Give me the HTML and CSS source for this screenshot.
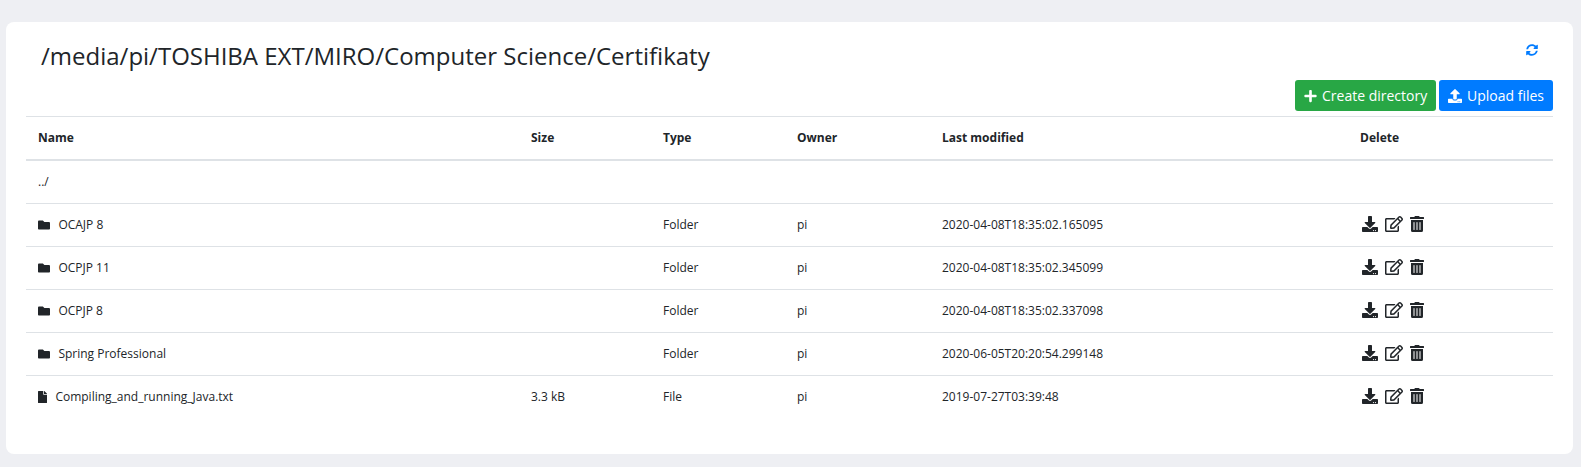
FILE: index.html
```html
<!DOCTYPE html>
<html lang="en">
<head>
<meta charset="utf-8">
<title>Certifikaty</title>
<link rel="stylesheet" href="styles.css">
</head>
<body>
<svg class="sprite" aria-hidden="true">
  <symbol id="plus" viewBox="0 0 448 512"><path d="M416 208H272V64c0-17.67-14.33-32-32-32h-32c-17.67 0-32 14.33-32 32v144H32c-17.67 0-32 14.33-32 32v32c0 17.67 14.33 32 32 32h144v144c0 17.67 14.33 32 32 32h32c17.67 0 32-14.33 32-32V304h144c17.67 0 32-14.33 32-32v-32c0-17.67-14.33-32-32-32z"/></symbol>
  <symbol id="upload" viewBox="0 0 512 512"><path d="M296 384h-80c-13.3 0-24-10.7-24-24V192h-87.7c-17.8 0-26.7-21.5-14.1-34.1L242.3 5.7c7.5-7.5 19.8-7.5 27.3 0l152.2 152.2c12.6 12.6 3.7 34.1-14.1 34.1H320v168c0 13.3-10.7 24-24 24zm216-8v112c0 13.3-10.7 24-24 24H24c-13.3 0-24-10.7-24-24V376c0-13.3 10.7-24 24-24h136v8c0 30.9 25.1 56 56 56h80c30.9 0 56-25.1 56-56v-8h136c13.3 0 24 10.7 24 24zm-124 88c0-11-9-20-20-20s-20 9-20 20 9 20 20 20 20-9 20-20zm64 0c0-11-9-20-20-20s-20 9-20 20 9 20 20 20 20-9 20-20z"/></symbol>
  <symbol id="download" viewBox="0 0 512 512"><path d="M216 0h80c13.3 0 24 10.7 24 24v168h87.7c17.8 0 26.7 21.5 14.1 34.1L269.7 378.3c-7.5 7.5-19.8 7.5-27.3 0L90.1 226.1c-12.6-12.6-3.7-34.1 14.1-34.1H192V24c0-13.3 10.7-24 24-24zm296 376v112c0 13.3-10.7 24-24 24H24c-13.3 0-24-10.7-24-24V376c0-13.3 10.7-24 24-24h146.7l49 49c20.1 20.1 52.5 20.1 72.6 0l49-49H488c13.3 0 24 10.7 24 24zm-124 88c0-11-9-20-20-20s-20 9-20 20 9 20 20 20 20-9 20-20zm64 0c0-11-9-20-20-20s-20 9-20 20 9 20 20 20 20-9 20-20z"/></symbol>
  <symbol id="edit" viewBox="0 0 576 512"><path d="M402.3 344.9l32-32c5-5 13.7-1.5 13.7 5.7V464c0 26.5-21.5 48-48 48H48c-26.5 0-48-21.5-48-48V112c0-26.5 21.5-48 48-48h273.5c7.1 0 10.7 8.6 5.7 13.7l-32 32c-1.5 1.5-3.5 2.3-5.7 2.3H48v352h352V350.5c0-2.1.8-4.1 2.3-5.6zm156.6-201.8L296.3 405.7l-90.4 10c-26.2 2.9-48.5-19.2-45.6-45.6l10-90.4L432.9 17.1c22.9-22.9 59.9-22.9 82.7 0l43.2 43.2c22.9 22.9 22.9 60 .1 82.8zM460.1 174L402 115.9 216.2 301.8l-7.3 65.3 65.3-7.3L460.1 174zm64.8-79.7l-43.2-43.2c-4.1-4.1-10.8-4.1-14.8 0L436 82l58.1 58.1 30.9-30.9c4-4.2 4-10.8-.1-14.9z"/></symbol>
  <symbol id="trash" viewBox="0 0 448 512"><path d="M32 464a48 48 0 0 0 48 48h288a48 48 0 0 0 48-48V128H32zm272-256a16 16 0 0 1 32 0v224a16 16 0 0 1-32 0zm-96 0a16 16 0 0 1 32 0v224a16 16 0 0 1-32 0zm-96 0a16 16 0 0 1 32 0v224a16 16 0 0 1-32 0zM432 32H312l-9.4-18.7A24 24 0 0 0 281.1 0H166.8a23.72 23.72 0 0 0-21.4 13.3L136 32H16A16 16 0 0 0 0 48v32a16 16 0 0 0 16 16h416a16 16 0 0 0 16-16V48a16 16 0 0 0-16-16z"/></symbol>
  <symbol id="folder" viewBox="0 0 512 512"><path d="M464 128H272l-64-64H48C21.49 64 0 85.49 0 112v288c0 26.51 21.49 48 48 48h416c26.51 0 48-21.49 48-48V176c0-26.51-21.49-48-48-48z"/></symbol>
  <symbol id="file" viewBox="0 0 384 512"><path d="M224 136V0H24C10.7 0 0 10.7 0 24v464c0 13.3 10.7 24 24 24h336c13.3 0 24-10.7 24-24V160H248c-13.2 0-24-10.8-24-24zm160-14.1v6.1H256V0h6.1c6.4 0 12.5 2.5 17 7l97.9 98c4.5 4.5 7 10.6 7 16.9z"/></symbol>
  <symbol id="sync" viewBox="0 0 512 512"><path d="M370.72 133.28C339.458 104.008 298.888 87.962 255.848 88c-77.458.068-144.328 53.178-162.791 126.85-1.344 5.363-6.122 9.15-11.651 9.15H24.103c-7.498 0-13.194-6.807-11.807-14.176C33.933 94.924 134.813 8 256 8c66.448 0 126.791 26.136 171.315 68.685L463.03 40.97C478.149 25.851 504 36.559 504 57.941V192c0 13.255-10.745 24-24 24H345.941c-21.382 0-32.09-25.851-16.971-40.971l41.75-41.749zM32 296h134.059c21.382 0 32.09 25.851 16.971 40.971l-41.75 41.75c31.262 29.273 71.835 45.319 114.876 45.28 77.418-.07 144.315-53.144 162.787-126.849 1.344-5.363 6.122-9.15 11.651-9.15h57.304c7.498 0 13.194 6.807 11.807 14.176C478.067 417.076 377.187 504 256 504c-66.448 0-126.791-26.136-171.315-68.685L48.97 471.03C33.851 486.149 8 475.441 8 454.059V320c0-13.255 10.745-24 24-24z"/></symbol>
</svg>
<main class="card">
  <header class="head">
    <h1 class="path">/media/pi/TOSHIBA EXT/MIRO/Computer Science/Certifikaty</h1>
    <a class="refresh"><svg class="icon"><use href="#sync"/></svg></a>
  </header>
  <div class="toolbar">
    <button class="btn btn-success"><svg class="icon icon-plus"><use href="#plus"/></svg>Create directory</button>
    <button class="btn btn-primary"><svg class="icon"><use href="#upload"/></svg>Upload files</button>
  </div>
  <table class="files">
    <colgroup><col class="c-name"><col class="c-size"><col class="c-type"><col class="c-owner"><col class="c-date"><col></colgroup>
    <thead>
      <tr><th>Name</th><th>Size</th><th>Type</th><th>Owner</th><th>Last modified</th><th>Delete</th></tr>
    </thead>
    <tbody>
      <tr><td>../</td><td></td><td></td><td></td><td></td><td></td></tr>
      <tr><td><span class="entry"><svg class="icon"><use href="#folder"/></svg>OCAJP 8</span></td><td></td><td>Folder</td><td>pi</td><td>2020-04-08T18:35:02.165095</td><td><span class="actions"><svg class="icon"><use href="#download"/></svg><svg class="icon wide"><use href="#edit"/></svg><svg class="icon narrow"><use href="#trash"/></svg></span></td></tr>
      <tr><td><span class="entry"><svg class="icon"><use href="#folder"/></svg>OCPJP 11</span></td><td></td><td>Folder</td><td>pi</td><td>2020-04-08T18:35:02.345099</td><td><span class="actions"><svg class="icon"><use href="#download"/></svg><svg class="icon wide"><use href="#edit"/></svg><svg class="icon narrow"><use href="#trash"/></svg></span></td></tr>
      <tr><td><span class="entry"><svg class="icon"><use href="#folder"/></svg>OCPJP 8</span></td><td></td><td>Folder</td><td>pi</td><td>2020-04-08T18:35:02.337098</td><td><span class="actions"><svg class="icon"><use href="#download"/></svg><svg class="icon wide"><use href="#edit"/></svg><svg class="icon narrow"><use href="#trash"/></svg></span></td></tr>
      <tr><td><span class="entry"><svg class="icon"><use href="#folder"/></svg>Spring Professional</span></td><td></td><td>Folder</td><td>pi</td><td>2020-06-05T20:20:54.299148</td><td><span class="actions"><svg class="icon"><use href="#download"/></svg><svg class="icon wide"><use href="#edit"/></svg><svg class="icon narrow"><use href="#trash"/></svg></span></td></tr>
      <tr><td><span class="entry"><svg class="icon icon-file"><use href="#file"/></svg>Compiling_and_running_Java.txt</span></td><td>3.3 kB</td><td>File</td><td>pi</td><td>2019-07-27T03:39:48</td><td><span class="actions"><svg class="icon"><use href="#download"/></svg><svg class="icon wide"><use href="#edit"/></svg><svg class="icon narrow"><use href="#trash"/></svg></span></td></tr>
    </tbody>
  </table>
</main>
</body>
</html>
```
FILE: styles.css
```css
* { box-sizing: border-box; }
body {
  margin: 0;
  padding: 22px 8px 0 6px;
  height: 467px;
  overflow: hidden;
  background: #eeeff3;
  color: #212529;
  font-family: "Open Sans", "Noto Sans", sans-serif;
  font-size: 12px;
  line-height: 18px;
}
.sprite { display: none; }
.icon { display: block; flex: none; width: 1em; height: 1em; fill: currentColor; }
.card {
  height: 432px;
  padding: 20px 20px 0;
  background: #fff;
  border-radius: 8px;
}
.head {
  display: flex;
  justify-content: space-between;
  align-items: flex-start;
  height: 38px;
  padding: 0 15px;
}
.path {
  margin: 0;
  font-size: 24px;
  font-weight: 400;
  line-height: 27px;
}
.refresh { padding-top: 2.4px; color: #007bff; }
.toolbar { display: flex; justify-content: flex-end; gap: 3px; height: 36px; }
.btn {
  display: flex;
  align-items: center;
  gap: 5px;
  height: 31px;
  padding: 0 9px;
  border: 0;
  border-radius: 3px;
  color: #fff;
  font: 14px/21px "Open Sans", "Noto Sans", sans-serif;
  white-space: nowrap;
}
.btn-success { width: 141px; background: #28a745; }
.btn-primary { width: 114px; background: #007bff; }
.icon-plus { width: 13px; }
.files {
  width: 1527px;
  table-layout: fixed;
  border-spacing: 0;
}
.c-name { width: 493px; }
.c-size { width: 132px; }
.c-type { width: 134px; }
.c-owner { width: 145px; }
.c-date { width: 418px; }
.files th, .files td {
  height: 43px;
  padding: 0 12px;
  border-top: 1px solid #dee2e6;
  text-align: left;
}
.files th { height: 45px; border-bottom: 2px solid #dee2e6; font-weight: 700; }
.files tbody tr:first-child td { height: 42px; border-top: 0; }
.entry { display: flex; align-items: center; gap: 8.4px; }
.icon-file { width: 9px; }
.actions { display: flex; align-items: center; gap: 7px; padding: 0 0 2px 2px; font-size: 16px; }
.wide { width: 18px; }
.narrow { width: 14px; }
```
